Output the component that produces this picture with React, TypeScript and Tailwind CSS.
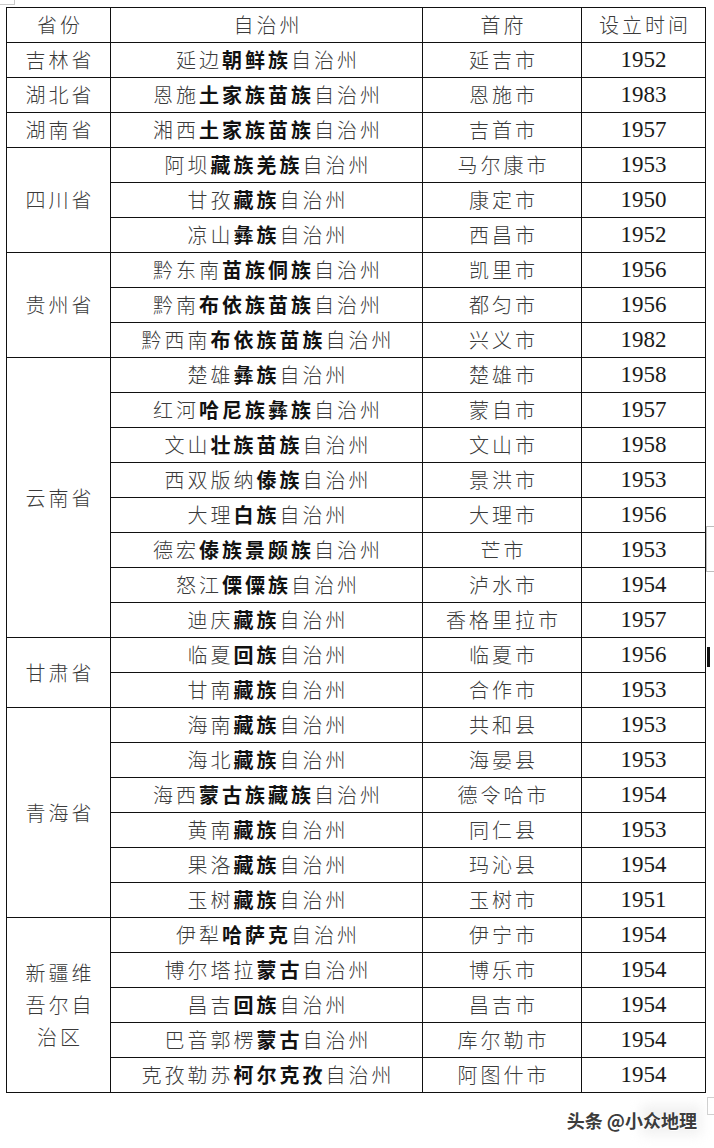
import React from "react";

type Seg = [string, boolean];
type Row = { prov?: string[]; span?: number; name: Seg[]; cap: string; year: string };

const b = (s: string): Seg => [s, true];
const n = (s: string): Seg => [s, false];

const rows: Row[] = [
  { prov: ["吉林省"], span: 1, name: [n("延边"), b("朝鲜族"), n("自治州")], cap: "延吉市", year: "1952" },
  { prov: ["湖北省"], span: 1, name: [n("恩施"), b("土家族苗族"), n("自治州")], cap: "恩施市", year: "1983" },
  { prov: ["湖南省"], span: 1, name: [n("湘西"), b("土家族苗族"), n("自治州")], cap: "吉首市", year: "1957" },
  { prov: ["四川省"], span: 3, name: [n("阿坝"), b("藏族羌族"), n("自治州")], cap: "马尔康市", year: "1953" },
  { name: [n("甘孜"), b("藏族"), n("自治州")], cap: "康定市", year: "1950" },
  { name: [n("凉山"), b("彝族"), n("自治州")], cap: "西昌市", year: "1952" },
  { prov: ["贵州省"], span: 3, name: [n("黔东南"), b("苗族侗族"), n("自治州")], cap: "凯里市", year: "1956" },
  { name: [n("黔南"), b("布依族苗族"), n("自治州")], cap: "都匀市", year: "1956" },
  { name: [n("黔西南"), b("布依族苗族"), n("自治州")], cap: "兴义市", year: "1982" },
  { prov: ["云南省"], span: 8, name: [n("楚雄"), b("彝族"), n("自治州")], cap: "楚雄市", year: "1958" },
  { name: [n("红河"), b("哈尼族彝族"), n("自治州")], cap: "蒙自市", year: "1957" },
  { name: [n("文山"), b("壮族苗族"), n("自治州")], cap: "文山市", year: "1958" },
  { name: [n("西双版纳"), b("傣族"), n("自治州")], cap: "景洪市", year: "1953" },
  { name: [n("大理"), b("白族"), n("自治州")], cap: "大理市", year: "1956" },
  { name: [n("德宏"), b("傣族景颇族"), n("自治州")], cap: "芒市", year: "1953" },
  { name: [n("怒江"), b("傈僳族"), n("自治州")], cap: "泸水市", year: "1954" },
  { name: [n("迪庆"), b("藏族"), n("自治州")], cap: "香格里拉市", year: "1957" },
  { prov: ["甘肃省"], span: 2, name: [n("临夏"), b("回族"), n("自治州")], cap: "临夏市", year: "1956" },
  { name: [n("甘南"), b("藏族"), n("自治州")], cap: "合作市", year: "1953" },
  { prov: ["青海省"], span: 6, name: [n("海南"), b("藏族"), n("自治州")], cap: "共和县", year: "1953" },
  { name: [n("海北"), b("藏族"), n("自治州")], cap: "海晏县", year: "1953" },
  { name: [n("海西"), b("蒙古族藏族"), n("自治州")], cap: "德令哈市", year: "1954" },
  { name: [n("黄南"), b("藏族"), n("自治州")], cap: "同仁县", year: "1953" },
  { name: [n("果洛"), b("藏族"), n("自治州")], cap: "玛沁县", year: "1954" },
  { name: [n("玉树"), b("藏族"), n("自治州")], cap: "玉树市", year: "1951" },
  { prov: ["新疆维", "吾尔自", "治区"], span: 5, name: [n("伊犁"), b("哈萨克"), n("自治州")], cap: "伊宁市", year: "1954" },
  { name: [n("博尔塔拉"), b("蒙古"), n("自治州")], cap: "博乐市", year: "1954" },
  { name: [n("昌吉"), b("回族"), n("自治州")], cap: "昌吉市", year: "1954" },
  { name: [n("巴音郭楞"), b("蒙古"), n("自治州")], cap: "库尔勒市", year: "1954" },
  { name: [n("克孜勒苏"), b("柯尔克孜"), n("自治州")], cap: "阿图什市", year: "1954" },
];

const spanClass: Record<number, string> = {
  1: "row-span-1",
  2: "row-span-2",
  3: "row-span-3",
  5: "row-span-5",
  6: "row-span-6",
  8: "row-span-8",
};

const cell =
  "border-r border-b border-[#111] flex items-center justify-center bg-white";
const cjk =
  "font-[family-name:'Noto_Sans_CJK_SC','Noto_Sans_CJK_TC',sans-serif] text-[20px] tracking-[3px] pl-[3px] text-[#3a3a3a] font-light";
const num = "font-[family-name:'Liberation_Serif',serif] text-[23px] text-[#1a1a1a]";

export default function App() {
  return (
    <div className="relative w-[714px] h-[1148px] bg-white overflow-hidden">
      {/* page corner marks */}
      <span className="absolute left-0 top-0 w-[15px] h-[5px] border-r border-b border-[#c8c8c8]" />
      <span className="absolute right-0 top-[526px] w-[8px] h-[46px] border-t border-b border-l border-[#bdbdbd]" />
      <span className="absolute left-[707px] top-[647px] w-[3px] h-[20px] bg-[#111]" />
      <span className="absolute right-0 top-[1097px] w-[7px] h-[18px] border-t border-b border-l border-[#cfcfcf]" />

      <div className="pt-[7px] pl-[6px]">
        <div className="grid grid-cols-[104px_312px_159px_124px] auto-rows-[35px] w-[700px] border-t border-l border-[#111]">
          <div className={`${cell} ${cjk}`}>省份</div>
          <div className={`${cell} ${cjk}`}>自治州</div>
          <div className={`${cell} ${cjk}`}>首府</div>
          <div className={`${cell} ${cjk}`}>设立时间</div>
          {rows.map((r, i) => (
            <React.Fragment key={i}>
              {r.prov && (
                <div className={`${cell} ${cjk} ${spanClass[r.span ?? 1]} flex-col leading-[32px]`}>
                  {r.prov.map((p, j) => (
                    <span key={j}>{p}</span>
                  ))}
                </div>
              )}
              <div className={`${cell} ${cjk}`}>
                {r.name.map(([t, bold], j) =>
                  bold ? (
                    <span key={j} className="font-bold text-[#111]">
                      {t}
                    </span>
                  ) : (
                    <span key={j}>{t}</span>
                  )
                )}
              </div>
              <div className={`${cell} ${cjk}`}>{r.cap}</div>
              <div className={`${cell} ${num}`}>{r.year}</div>
            </React.Fragment>
          ))}
        </div>
      </div>

      <div className="flex justify-end pr-[13px] mt-[14px]">
        <div className="relative px-1">
          <span className="absolute right-[0px] top-[-2px] w-[60px] h-[30px] bg-[#f1f1f1] blur-[6px]" />
          <span className="relative font-[family-name:'Noto_Sans_CJK_SC',sans-serif] font-bold text-[18px] text-[#3c3c3c] [text-shadow:0_0_1px_#fff,0_0_2px_#fff,1px_1px_0_#fff]">
            头条 @小众地理
          </span>
        </div>
      </div>
    </div>
  );
}
